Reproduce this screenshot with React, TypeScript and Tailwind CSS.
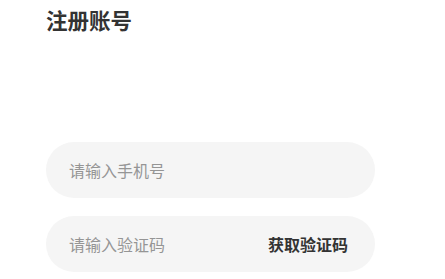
import React from 'react';

const font = { fontFamily: '"Noto Sans CJK SC", "Noto Sans", sans-serif' };

export default function App() {
  return (
    <div className="min-h-screen bg-white pl-[46px] pt-[6px]" style={font}>
      <h1 className="text-[21.5px] leading-[28px] font-bold text-[#333333]">注册账号</h1>

      <div className="mt-[108px] flex w-[329px] flex-col gap-[18px]">
        <div className="flex h-[56px] items-center rounded-full bg-[#f5f5f5] px-[23px]">
          <input
            className="w-full bg-transparent text-[16px] text-[#333] outline-none placeholder:text-[#959595]"
            placeholder="请输入手机号"
          />
        </div>
        <div className="flex h-[56px] items-center rounded-full bg-[#f5f5f5] pl-[23px] pr-[27px]">
          <input
            className="min-w-0 flex-1 bg-transparent text-[16px] text-[#333] outline-none placeholder:text-[#959595]"
            placeholder="请输入验证码"
          />
          <button className="shrink-0 text-[16px] font-bold text-[#333333]">获取验证码</button>
        </div>
      </div>
    </div>
  );
}
